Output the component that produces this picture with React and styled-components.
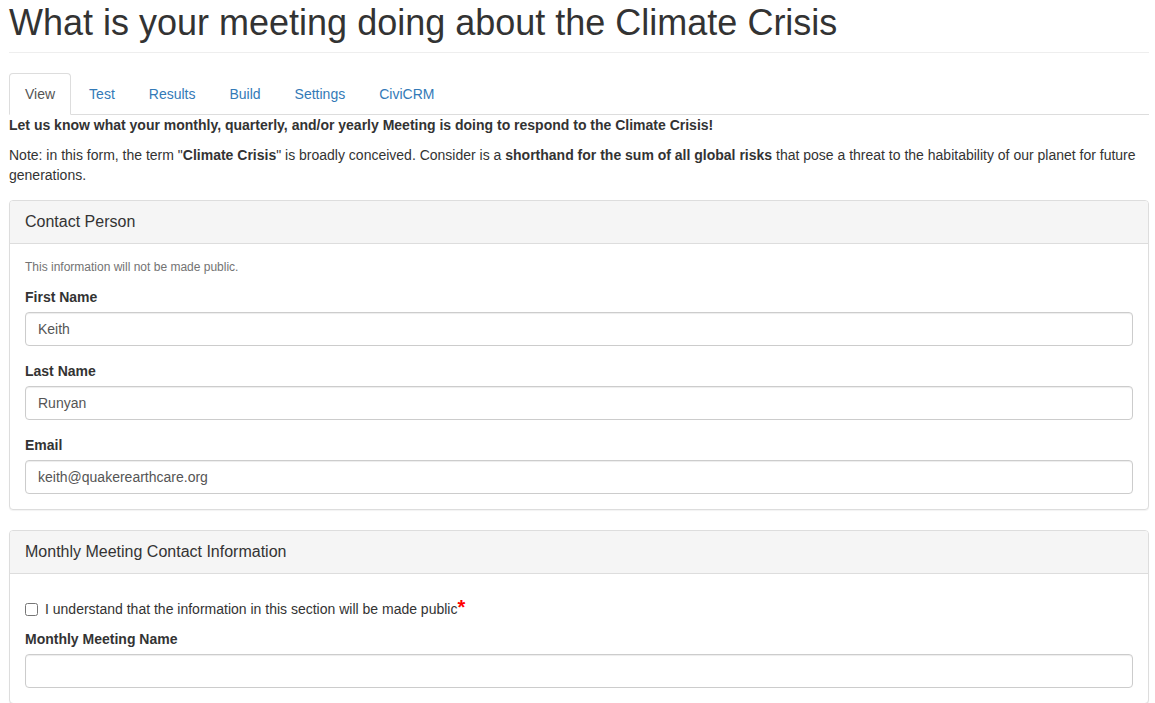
import React from 'react';
import styled, {createGlobalStyle} from 'styled-components';

const GlobalStyle = createGlobalStyle`
    html, body {
        margin: 0;
        padding: 0;
        background: #fff;
    }
    body {
        font-family: "Liberation Sans", Arial, Helvetica, sans-serif;
        font-size: 14px;
        line-height: 20px;
        color: #333;
    }
    * {
        box-sizing: border-box;
    }
`;

const Page = styled.div`
    padding: 0 6px 0 9px;
`;

const PageHeader = styled.div`
    padding-bottom: 9px;
    margin: 0 0 20px;
    border-bottom: 1px solid #eee;
    > h1 {
        margin: 3px 0 0;
        font-size: 36px;
        font-weight: 500;
        line-height: 1.1;
        color: #333;
    }
`;

const Tabs = styled.ul`
    display: flex;
    list-style: none;
    margin: 0;
    padding: 0;
    border-bottom: 1px solid #ddd;
`;

const Tab = styled.li`
    margin: 0 2px -1px 0;
    > a {
        display: block;
        padding: 10px 15px;
        line-height: 20px;
        border: 1px solid ${props => props.active ? '#ddd' : 'transparent'};
        border-bottom-color: transparent;
        border-radius: 4px 4px 0 0;
        background: ${props => props.active ? '#fff' : 'transparent'};
        color: ${props => props.active ? '#555' : '#337ab7'};
        text-decoration: none;
    }
`;

const Intro = styled.p`
    margin: 0 0 10px;
    font-weight: 700;
`;

const Note = styled.p`
    margin: 0 0 15px;
    > strong {
        font-weight: 700;
    }
`;

const Panel = styled.div`
    margin-bottom: 20px;
    border: 1px solid #ddd;
    border-radius: 4px;
    background: #fff;
    box-shadow: 0 1px 1px rgba(0, 0, 0, 0.05);
`;

const PanelHeading = styled.div`
    padding: 12px 15px;
    line-height: 18px;
    font-size: 16px;
    color: #333;
    background: #f5f5f5;
    border-bottom: 1px solid #ddd;
    border-radius: 3px 3px 0 0;
`;

const PanelBody = styled.div`
    padding: 15px;
`;

const HelpBlock = styled.div`
    font-size: 12px;
    line-height: 17px;
    color: #737373;
    margin-bottom: 11px;
`;

const FormGroup = styled.div`
    margin-bottom: 15px;
    &:last-child {
        margin-bottom: 0;
    }
`;

const Label = styled.label`
    display: block;
    margin-bottom: 5px;
    font-weight: 700;
    line-height: 20px;
`;

const Input = styled.input`
    display: block;
    width: 100%;
    height: 34px;
    padding: 6px 12px;
    font-family: inherit;
    font-size: 14px;
    line-height: 20px;
    color: #555;
    background: #fff;
    border: 1px solid #ccc;
    border-radius: 4px;
    box-shadow: inset 0 1px 1px rgba(0, 0, 0, 0.075);
    outline: none;
`;

const CheckRow = styled.label`
    display: flex;
    align-items: center;
    margin: 10px 0;
    line-height: 20px;
    font-weight: 400;
    > input {
        width: 13px;
        height: 13px;
        margin: 1px 7px 0 0;
    }
`;

const Required = styled.span`
    color: #f00;
    font-weight: 700;
    font-size: 20px;
    line-height: 14px;
    align-self: flex-start;
    margin-top: 1px;
`;

const Field = ({label, value}) => (
    <FormGroup>
        <Label>{label}</Label>
        <Input type="text" defaultValue={value} />
    </FormGroup>
);

const tabs = ['View', 'Test', 'Results', 'Build', 'Settings', 'CiviCRM'];

export default function App() {
    return (
        <Page>
            <GlobalStyle />
            <PageHeader>
                <h1>What is your meeting doing about the Climate Crisis</h1>
            </PageHeader>

            <Tabs>
                {tabs.map((t, i) => (
                    <Tab key={t} active={i === 0}><a href="#">{t}</a></Tab>
                ))}
            </Tabs>

            <Intro>Let us know what your monthly, quarterly, and/or yearly Meeting is doing to respond to the Climate Crisis!</Intro>
            <Note>
                Note: in this form, the term "<strong>Climate Crisis</strong>" is broadly conceived. Consider is a <strong>shorthand for the sum of all global risks</strong> that pose a threat to the habitability of our planet for future generations.
            </Note>

            <Panel>
                <PanelHeading>Contact Person</PanelHeading>
                <PanelBody>
                    <HelpBlock>This information will not be made public.</HelpBlock>
                    <Field label="First Name" value="Keith" />
                    <Field label="Last Name" value="Runyan" />
                    <Field label="Email" value="keith@quakerearthcare.org" />
                </PanelBody>
            </Panel>

            <Panel>
                <PanelHeading>Monthly Meeting Contact Information</PanelHeading>
                <PanelBody>
                    <CheckRow>
                        <input type="checkbox" />
                        I understand that the information in this section will be made public<Required>*</Required>
                    </CheckRow>
                    <Field label="Monthly Meeting Name" value="" />
                </PanelBody>
            </Panel>
        </Page>
    );
}
